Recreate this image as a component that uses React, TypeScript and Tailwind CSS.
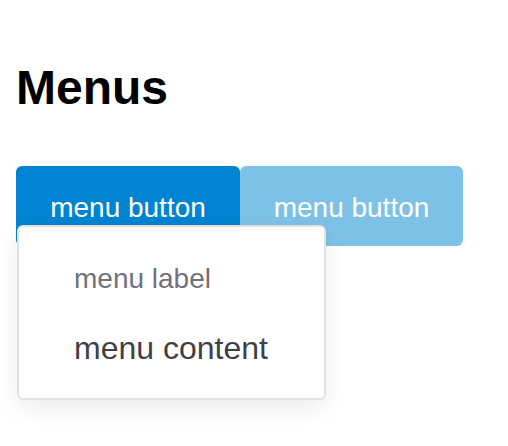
import React from "react";

const App = () => {
  return (
    <div className="min-h-screen bg-white px-4 font-['Liberation_Sans',Arial,sans-serif]">
      <h1 className="pt-[64px] text-5xl leading-none font-bold text-black">Menus</h1>
      <div className="relative mt-[54px] flex">
        <button className="h-[80px] w-[224px] rounded-md bg-sky-600 pt-1 text-[28px] text-white">
          menu button
        </button>
        <button
          disabled
          className="h-[80px] w-[223px] rounded-md bg-sky-600 pt-1 text-[28px] text-white opacity-50"
        >
          menu button
        </button>
        <div className="absolute left-[1px] top-[59px] w-[309px] rounded-md border-2 border-[#e2e2e2] bg-white pt-[17px] pb-[16px] shadow-[0_8px_24px_rgba(0,0,0,0.08)]">
          <div className="flex h-[69px] items-center pl-[55px] text-[28px] text-zinc-500">
            menu label
          </div>
          <div className="flex h-[69px] items-center pl-[55px] text-[32px] text-zinc-700">
            menu content
          </div>
        </div>
      </div>
    </div>
  );
};

export default App;
